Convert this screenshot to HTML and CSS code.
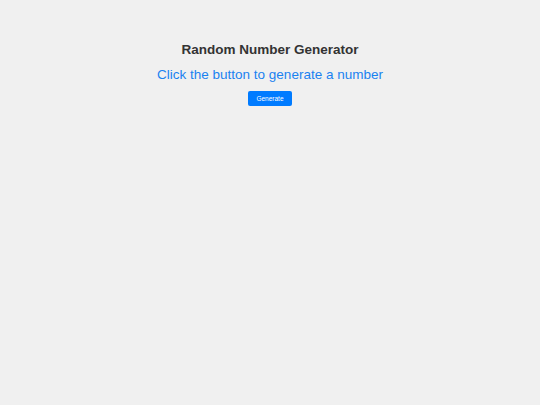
FILE: index.html
```html
<!DOCTYPE html>
<html>
<head>
<meta charset="utf-8">
<link rel="stylesheet" href="styles.css">
</head>
<body>
<div class="container">
  <h1 class="title">Random Number Generator</h1>
  <p class="result">Click the button to generate a number</p>
  <button class="btn">Generate</button>
</div>
</body>
</html>
```
FILE: styles.css
```css
html, body {
  margin: 0;
  padding: 0;
  background: #f0f0f0;
  font-family: "Liberation Sans", Arial, sans-serif;
}
.container {
  display: flex;
  flex-direction: column;
  align-items: center;
  padding-top: 41px;
}
.title {
  margin: 0;
  font-size: 13.5px;
  font-weight: bold;
  color: #333333;
  line-height: 18px;
}
.result {
  margin: 7px 0 0 0;
  font-size: 13.5px;
  color: #1a82f0;
  line-height: 18px;
}
.btn {
  margin-top: 7px;
  width: 44px;
  height: 15px;
  padding: 0;
  border: none;
  border-radius: 2px;
  background: #007bff;
  color: #ffffff;
  font-family: "Liberation Sans", Arial, sans-serif;
  font-size: 6.5px;
}
```
